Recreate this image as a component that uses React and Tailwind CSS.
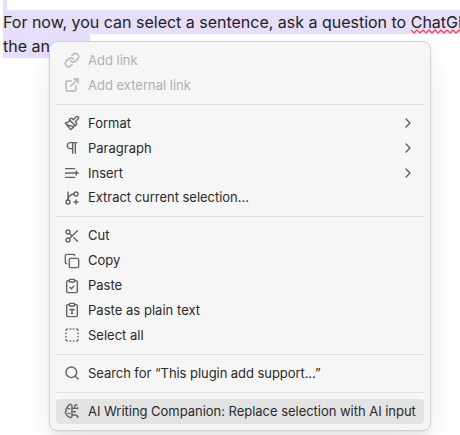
import React from 'react';
import {
  Link, ExternalLink, Pilcrow, GitBranchPlus, Scissors, Copy,
  ClipboardCheck, ClipboardType, BoxSelect, Search, ChevronRight,
} from 'lucide-react';

function Svg({ children }) {
  return (
    <svg width="16" height="16" viewBox="0 0 24 24" fill="none" stroke="currentColor" strokeWidth="2.1" strokeLinecap="round" strokeLinejoin="round">
      {children}
    </svg>
  );
}

const Brush = () => (
  <Svg>
    <path d="M18.37 2.63 14 7l-1.59-1.59a2 2 0 0 0-2.82 0L8 7l9 9 1.59-1.59a2 2 0 0 0 0-2.82L17 10l4.37-4.37a2.12 2.12 0 1 0-3-3Z" />
    <path d="M9 8c-2 3-4 3.5-7 4l8 10c2-1 6-5 6-7" />
    <path d="M14.5 17.5 4.5 15" />
  </Svg>
);

const InsertLines = () => (
  <Svg>
    <path d="M2.5 5.5H16" />
    <path d="M2.5 12H21.5" />
    <path d="M2.5 18.5H16" />
    <path d="M18.5 9v6" />
  </Svg>
);

const Brain = () => (
  <Svg>
    <path d="M12 4.5a2.5 2.5 0 0 0-4.96-.46 2.5 2.5 0 0 0-1.98 3 2.5 2.5 0 0 0-1.32 4.24 3 3 0 0 0 .34 5.58 2.5 2.5 0 0 0 2.96 3.08 2.5 2.5 0 0 0 4.91.05L12 20V4.5Z" />
    <path d="M16 8V5c0-1.1.9-2 2-2" />
    <path d="M12 13h4" />
    <path d="M12 18h6a2 2 0 0 1 2 2v1" />
    <path d="M12 8h8" />
    <path d="M6 8.5h2.5M6.5 15.5h2.5" />
    <circle cx="20.5" cy="8" r=".5" />
    <circle cx="16.5" cy="13" r=".5" />
    <circle cx="20.5" cy="21" r=".5" />
    <circle cx="18.5" cy="3" r=".5" />
  </Svg>
);

const groups = [
  [
    { label: 'Add link', icon: Link, disabled: true },
    { label: 'Add external link', icon: ExternalLink, disabled: true },
  ],
  [
    { label: 'Format', icon: Brush, submenu: true },
    { label: 'Paragraph', icon: Pilcrow, submenu: true },
    { label: 'Insert', icon: InsertLines, submenu: true },
    { label: 'Extract current selection...', icon: GitBranchPlus, tracking: 'tracking-[-0.03px]' },
  ],
  [
    { label: 'Cut', icon: Scissors },
    { label: 'Copy', icon: Copy },
    { label: 'Paste', icon: ClipboardCheck },
    { label: 'Paste as plain text', icon: ClipboardType, tracking: 'tracking-[0.03px]' },
    { label: 'Select all', icon: BoxSelect },
  ],
  [{ label: 'Search for “This plugin add support...”', icon: Search, tracking: 'tracking-[-0.06px]' }],
  [{ label: 'AI Writing Companion: Replace selection with AI input', icon: Brain, active: true, tracking: 'tracking-[-0.03px]' }],
];

function Item({ label, icon: Icon, disabled, submenu, active, tracking = '' }) {
  return (
    <div className={`flex h-[24.9px] items-center gap-2 rounded px-2 whitespace-nowrap ${active ? 'bg-[#e3e3e3]' : ''} ${disabled ? 'text-[#b0b0b0]' : 'text-[#2a2a2a]'}`}>
      <span className={`flex w-4 shrink-0 ${disabled ? 'text-[#b4b4b4]' : 'text-[#646464]'}`}>
        <Icon size={16} strokeWidth={2.1} />
      </span>
      <span className={`grow ${tracking}`}>{label}</span>
      {submenu && <ChevronRight size={16} strokeWidth={2.1} className="text-[#5c5c5c]" />}
    </div>
  );
}

export default function App() {
  return (
    <div className="relative h-[435px] w-[460px] overflow-hidden bg-white font-['Inter',sans-serif]">
      <div className="pl-[3px] text-base leading-6 tracking-[-0.01px] whitespace-nowrap text-[#222222]">
        <div className="h-[10px] w-1 bg-[#e6defb]" />
        <div className="h-6 bg-[#e6defb]">
          For now, you can select a sentence, ask a question to <span className="relative">ChatGPT
            <svg className="absolute top-[17px] left-0" width="60" height="5" fill="none" stroke="#ff3f3f" strokeWidth="1.2">
              <path d="M0 1 l3 3 l3 -3 l3 3 l3 -3 l3 3 l3 -3 l3 3 l3 -3 l3 3 l3 -3 l3 3 l3 -3 l3 3 l3 -3 l3 3 l3 -3 l3 3 l3 -3" />
            </svg>
          </span>
        </div>
        <div className="h-6 w-[87px] bg-[#e6defb]">the answer</div>
      </div>

      <div className="absolute top-[41px] left-[49px] w-[382px] rounded-lg border border-[#d0d0d0] bg-[#f6f6f6] p-1.5 text-[13px] leading-[16.9px] shadow-[0px_1px_2px_rgba(0,0,0,0.028),0px_3.4px_6.7px_rgba(0,0,0,0.042),0px_15px_30px_rgba(0,0,0,0.07)]">
        {groups.map((items, g) => (
          <React.Fragment key={g}>
            {g > 0 && <div className="my-1.5 h-px bg-[#e0e0e0]" />}
            {items.map((item) => <Item key={item.label} {...item} />)}
          </React.Fragment>
        ))}
      </div>
    </div>
  );
}
